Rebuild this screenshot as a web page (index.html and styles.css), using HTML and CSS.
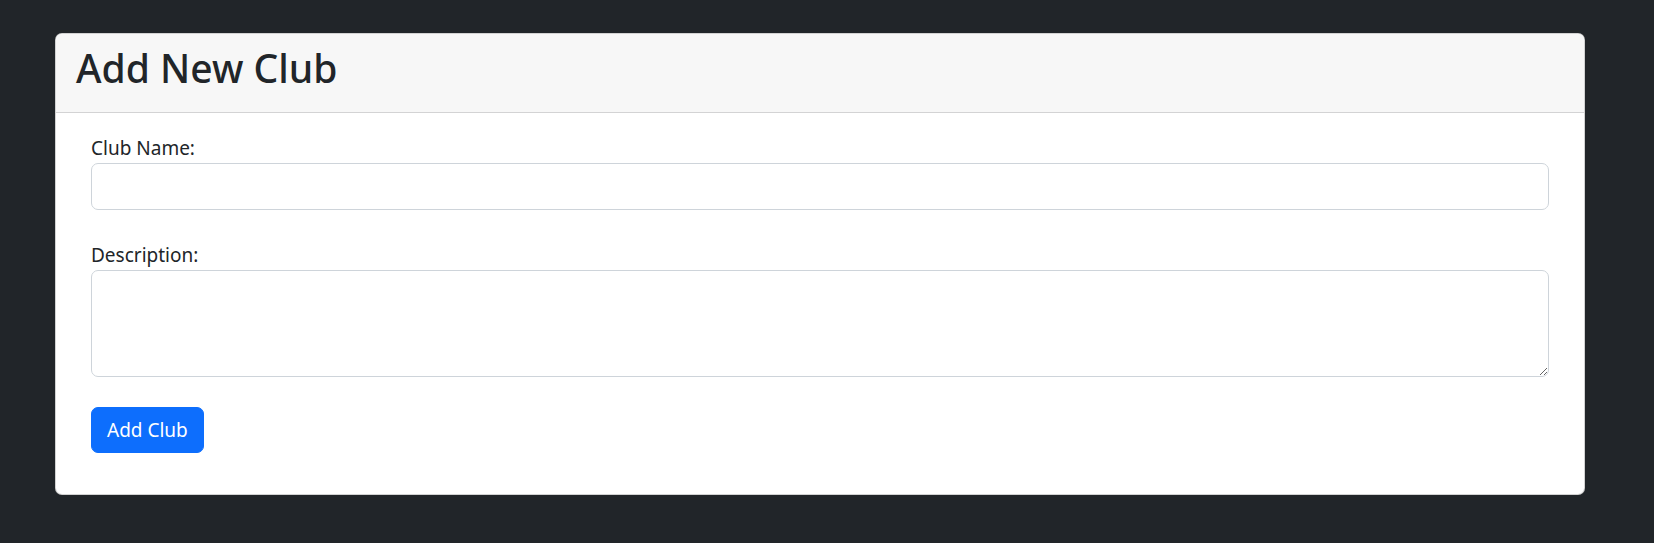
FILE: index.html
```html
<!DOCTYPE html>
<html lang="en">
<head>
<meta charset="utf-8">
<title>Add New Club</title>
<link rel="stylesheet" href="styles.css">
</head>
<body>
<main class="page">
  <section class="card">
    <header class="card-header">
      <h2 class="card-title">Add New Club</h2>
    </header>
    <div class="card-body">
      <form class="club-form">
        <div class="field">
          <label class="field-label" for="name">Club Name:</label>
          <input class="field-input" id="name" type="text">
        </div>
        <div class="field">
          <label class="field-label" for="desc">Description:</label>
          <textarea class="field-input field-textarea" id="desc"></textarea>
        </div>
        <button class="btn-primary" type="button">Add Club</button>
      </form>
    </div>
  </section>
</main>
</body>
</html>
```
FILE: styles.css
```css
* { box-sizing: border-box; }
html, body { margin: 0; padding: 0; }
body {
  background: #212529;
  font-family: "Noto Sans", "Open Sans", sans-serif;
  color: #212529;
  width: 1654px;
  height: 543px;
  overflow: hidden;
}
.page {
  padding: 33px 69px 0 55px;
}
.card {
  background: #fff;
  border: 1px solid rgba(0,0,0,0.175);
  border-radius: 7px;
  overflow: hidden;
}
.card-header {
  background: #f7f7f7;
  border-bottom: 1px solid #d3d3d4;
  padding: 10px 20px;
}
.card-title {
  margin: 0 0 10px;
  font-size: 39px;
  line-height: 48px;
  font-weight: 500;
  color: #212529;
}
.card-body {
  padding: 20px 35px 21px;
}
.club-form {
  display: flex;
  flex-direction: column;
  align-items: flex-start;
  margin-bottom: 20px;
}
.field {
  width: 100%;
  margin-bottom: 30px;
  display: flex;
  flex-direction: column;
}
.field-label {
  font-size: 19px;
  line-height: 30px;
  color: #212529;
}
.field-input {
  display: block;
  width: 100%;
  height: 47px;
  border: 1px solid #ced4da;
  border-radius: 7px;
  background: #fff;
  font: inherit;
  font-size: 19px;
  padding: 7px 15px;
  margin: 0;
}
.field-textarea {
  height: 107px;
  resize: vertical;
}
.btn-primary {
  background: #0d6efd;
  color: #fff;
  border: 1px solid #0d6efd;
  border-radius: 7px;
  font-family: inherit;
  font-size: 19px;
  line-height: 30px;
  height: 46px;
  padding: 7px 15px;
  white-space: nowrap;
  cursor: pointer;
}
```
